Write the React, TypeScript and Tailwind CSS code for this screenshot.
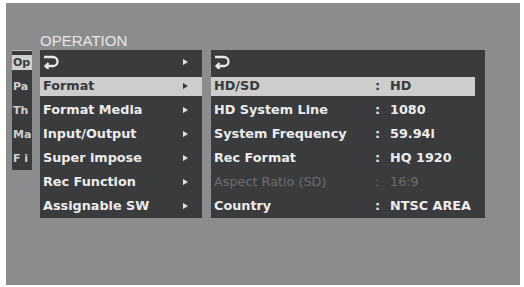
import React from 'react';

const MENU = ['Format', 'Format Media', 'Input/Output', 'Super impose', 'Rec Function', 'Assignable SW'];

const SETTINGS: { label: string; value: string; disabled?: boolean }[] = [
  { label: 'HD/SD', value: 'HD' },
  { label: 'HD System Line', value: '1080' },
  { label: 'System Frequency', value: '59.94i' },
  { label: 'Rec Format', value: 'HQ 1920' },
  { label: 'Aspect Ratio (SD)', value: '16:9', disabled: true },
  { label: 'Country', value: 'NTSC AREA' },
];

const TABS = ['Op', 'Pa', 'Th', 'Ma', 'F i'];

const ReturnIcon: React.FC = () => (
  <svg width="16" height="14" viewBox="0 0 16 14" fill="none" stroke="currentColor" strokeWidth="2.3">
    <path d="M1 2 H10 A4.5 4.5 0 0 1 10 11 H3" />
    <path d="M5.5 8 L2.5 11 L5.5 14" strokeLinejoin="miter" />
  </svg>
);

const Arrow: React.FC<{ dark?: boolean }> = ({ dark }) => (
  <span className={`block w-0 h-0 border-y-[3.5px] border-y-transparent border-l-[5px] ${dark ? 'border-l-[#3a3a3c]' : 'border-l-[#e4e4e4]'}`} />
);

export default function App() {
  return (
    <div className="w-[524px] h-[287px] bg-white pt-[3px] pl-[6px] font-['DejaVu_Sans',sans-serif]">
      <div className="w-[514px] h-[282px] bg-[#8b8c8e] pl-[6px] flex">
        {/* tab strip */}
        <div className="mt-[47px] w-[20px] h-[120px] bg-[#3a3b3d] border-t border-[#b8b8b8] flex flex-col">
          {TABS.map((t, i) => (
            <div key={t} className="h-[24px] flex items-center">
              <div
                className={`w-full h-[15px] flex items-center pl-[1px] text-[11px] font-bold leading-none ${
                  i === 0 ? 'bg-[#cfcfcf] text-[#3a3a3c]' : 'text-[#cfcfcf]'
                }`}
              >
                {t}
              </div>
            </div>
          ))}
        </div>

        <div className="ml-[8px] flex flex-col">
          <div className="h-[47px] flex items-end pb-[2px] text-[15px] leading-none text-[#e6e6e6] font-['Liberation_Sans',sans-serif]">
            OPERATION
          </div>
          <div className="flex gap-[9px]">
            {/* left menu */}
            <div className="w-[162px] h-[168px] bg-[#3a3b3d] flex flex-col">
              <div className="h-[24px] flex items-center justify-between pl-[3px] pr-[14px] text-[#e8e8e8]">
                <ReturnIcon />
                <Arrow />
              </div>
              {MENU.map((m, i) => (
                <div key={m} className="h-[24px] flex items-center">
                  <div
                    className={`w-full h-[19px] flex items-center justify-between pl-[3px] pr-[14px] text-[12.8px] leading-none font-bold ${
                      i === 0 ? 'bg-[#cdcdcd] text-[#3a3a3c]' : 'text-[#ececec]'
                    }`}
                  >
                    <span>{m}</span>
                    <Arrow dark={i === 0} />
                  </div>
                </div>
              ))}
            </div>

            {/* right settings */}
            <div className="w-[274px] h-[168px] bg-[#3a3b3d] flex flex-col pr-[10px]">
              <div className="h-[24px] flex items-center pl-[3px] text-[#e8e8e8]">
                <ReturnIcon />
              </div>
              {SETTINGS.map((s, i) => (
                <div key={s.label} className="h-[24px] flex items-center">
                  <div
                    className={`w-full h-[19px] flex items-center pl-[3px] text-[12.8px] leading-none ${
                      i === 0
                        ? 'bg-[#cdcdcd] text-[#3a3a3c] font-bold'
                        : s.disabled
                        ? 'text-[#6c6d6f] font-normal'
                        : 'text-[#ececec] font-bold'
                    }`}
                  >
                    <span className="w-[161px]">{s.label}</span>
                    <span className="w-[15px]">:</span>
                    <span>{s.value}</span>
                  </div>
                </div>
              ))}
            </div>
          </div>
        </div>
      </div>
    </div>
  );
}
